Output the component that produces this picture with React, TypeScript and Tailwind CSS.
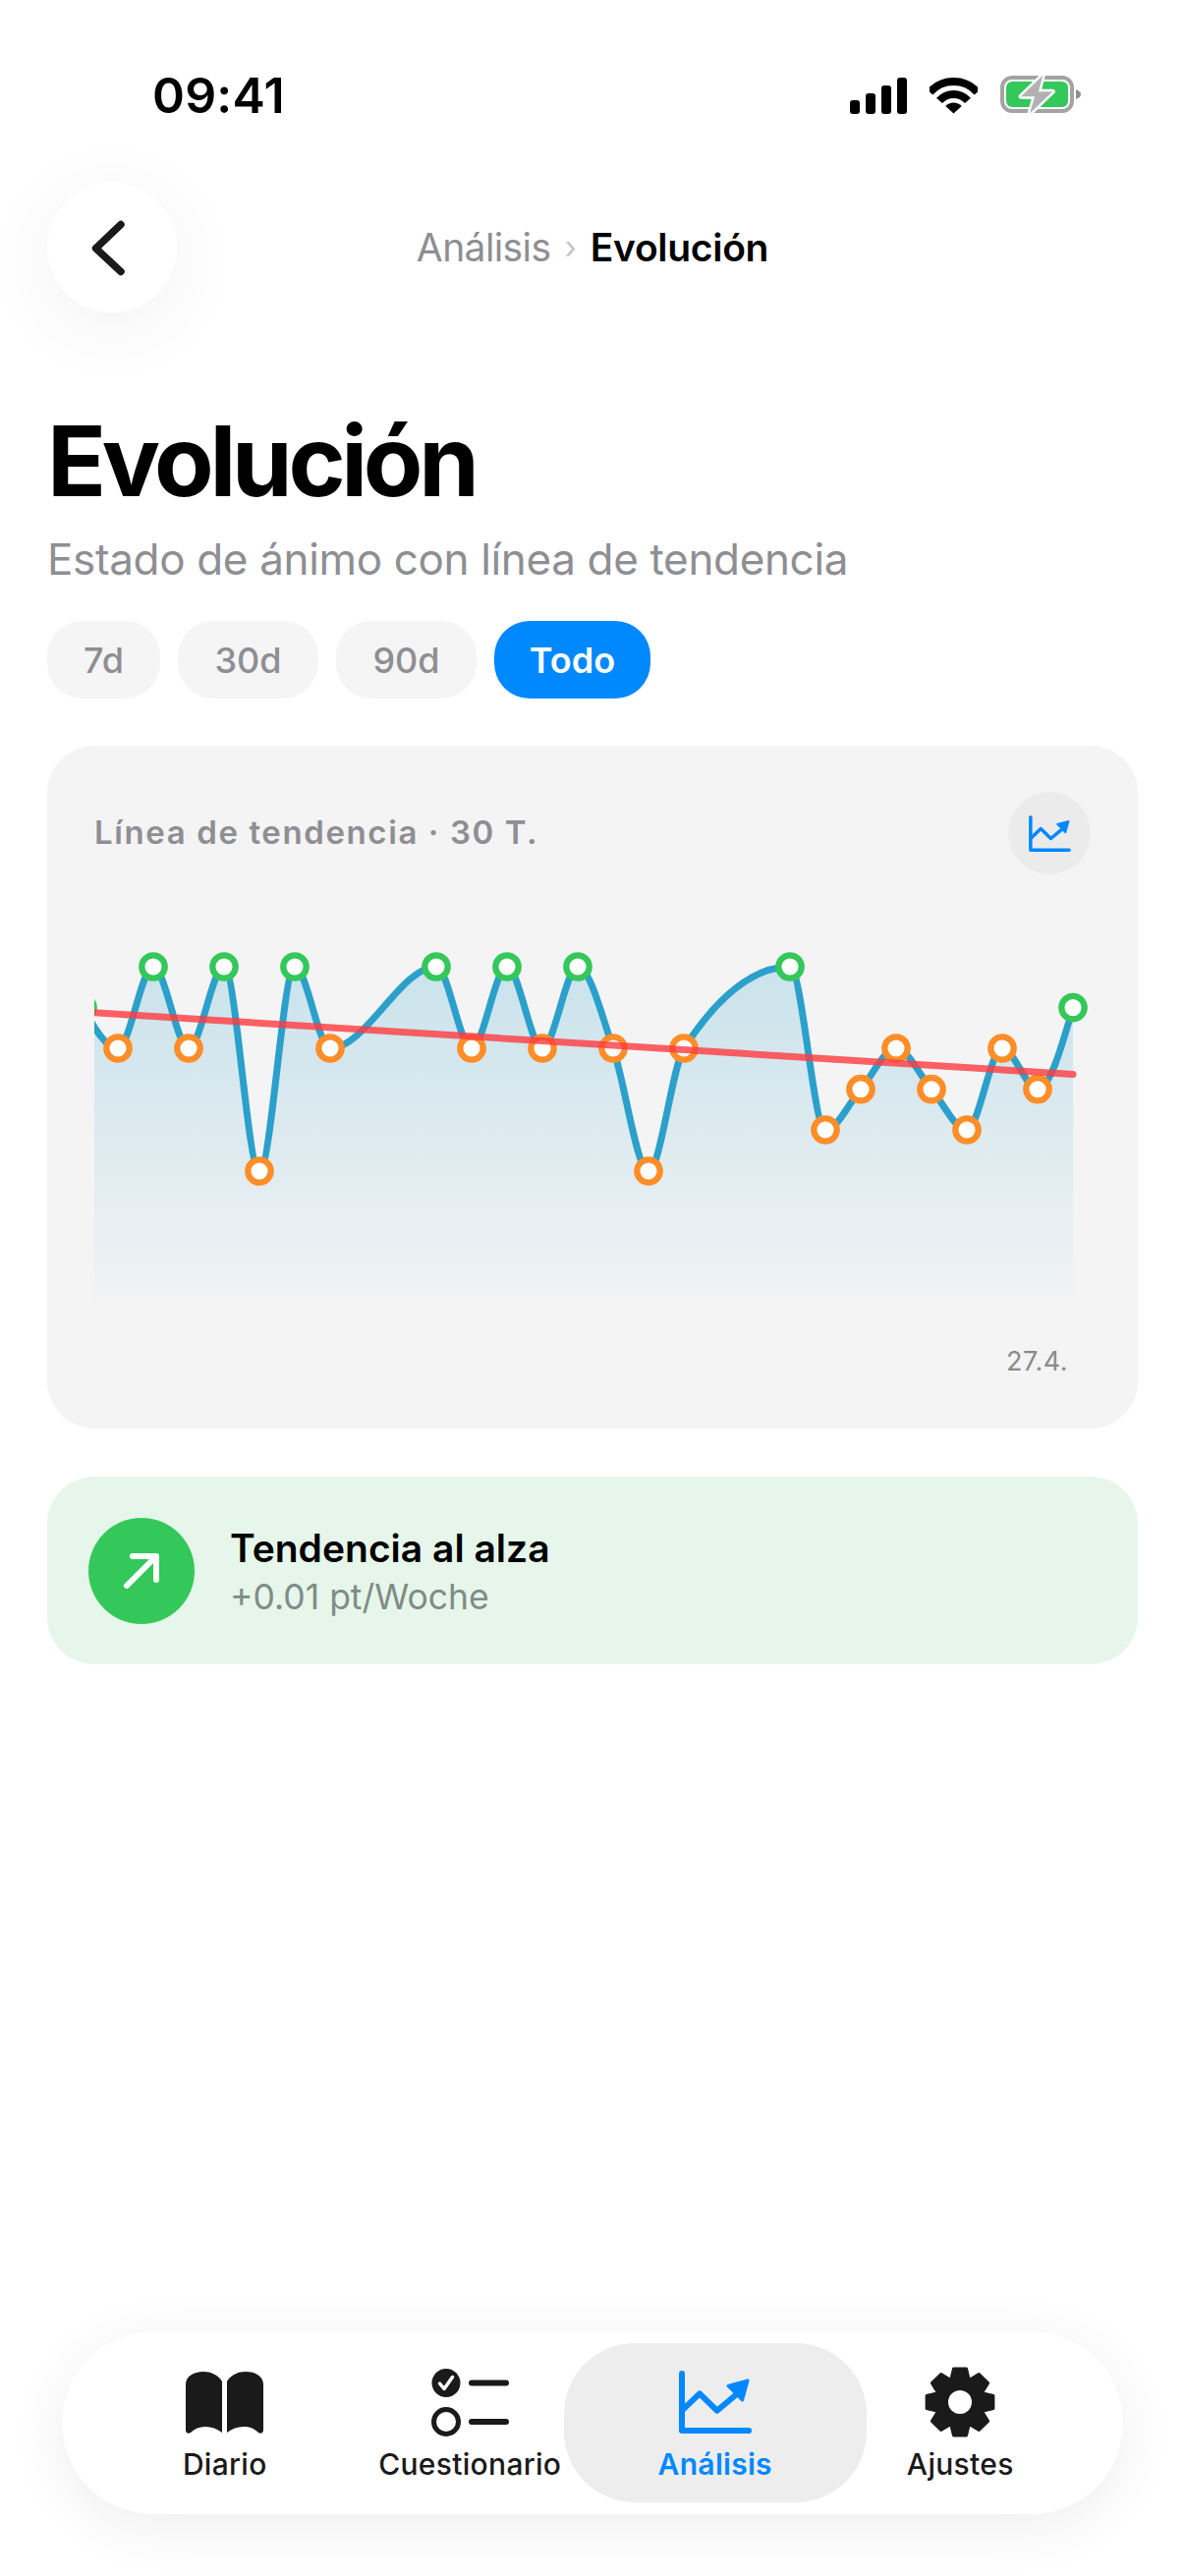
import React from "react";

type Pt = [number, number];

const L = [984, 1025.6, 1067, 1108.7, 1150, 1192];
const points: Pt[] = [
  [84, L[1]], [120, L[2]], [156, L[0]], [192, L[2]], [228, L[0]], [264, L[5]], [300, L[0]], [336, L[2]],
  [444, L[0]], [480, L[2]], [516, L[0]], [552, L[2]], [588, L[0]], [624, L[2]], [660, L[5]], [696, L[2]],
  [804, L[0]], [840, L[4]], [876, L[3]], [912, L[2]], [948, L[3]], [984, L[4]], [1020, L[2]], [1056, L[3]],
  [1092, L[1]],
];

// monotone x curve, same maths as d3
const monotonePath = (p: Pt[]) => {
  const sign = (v: number) => (v < 0 ? -1 : 1);
  const t: number[] = p.map((pt, i) => {
    if (i === 0 || i === p.length - 1) return 0;
    const h0 = pt[0] - p[i - 1][0];
    const h1 = p[i + 1][0] - pt[0];
    const s0 = (pt[1] - p[i - 1][1]) / h0;
    const s1 = (p[i + 1][1] - pt[1]) / h1;
    const q = (s0 * h1 + s1 * h0) / (h0 + h1);
    return (sign(s0) + sign(s1)) * Math.min(Math.abs(s0), Math.abs(s1), 0.5 * Math.abs(q)) || 0;
  });
  const n = p.length - 1;
  t[0] = (3 * (p[1][1] - p[0][1])) / (p[1][0] - p[0][0]) / 2 - t[1] / 2;
  t[n] = (3 * (p[n][1] - p[n - 1][1])) / (p[n][0] - p[n - 1][0]) / 2 - t[n - 1] / 2;
  let d = `M${p[0][0]} ${p[0][1]}`;
  for (let i = 0; i < n; i++) {
    const dx = (p[i + 1][0] - p[i][0]) / 3;
    d += `C${p[i][0] + dx} ${p[i][1] + dx * t[i]} ${p[i + 1][0] - dx} ${p[i + 1][1] - dx * t[i + 1]} ${p[i + 1][0]} ${p[i + 1][1]}`;
  }
  return d;
};

const gearPath = () => {
  let d = "";
  for (let i = 0; i < 8; i++) {
    const a = (i * Math.PI) / 4 - Math.PI / 2;
    const pts: [number, number][] = [
      [25, -0.37],
      [34.5, -0.19],
      [34.5, 0.19],
      [25, 0.37],
    ];
    pts.forEach(([r, o]) => {
      const x = 36 + r * Math.cos(a + o);
      const y = 36 + r * Math.sin(a + o);
      d += `${d ? "L" : "M"}${x.toFixed(2)} ${y.toFixed(2)}`;
    });
  }
  return d + "Z";
};

const ChartIcon = ({ className }: { className: string }) => (
  <svg viewBox="0 0 74 64" className={className} fill="none" stroke="#0088ff" strokeWidth="6" strokeLinecap="round" strokeLinejoin="round">
    <path d="M3 3V61H71" />
    <path d="M3 40.7L21 23.3L38.7 40.7L56.6 25.7" />
    <path d="M50 15.5L70 10L64.5 30Z" fill="#0088ff" strokeWidth="3" />
  </svg>
);

const BookIcon = () => (
  <svg viewBox="0 0 79 63" className="w-[79px] h-[63px]" fill="#1a1a1a">
    <path d="M37 10C33 3 25 0 18 0C8 0 0 5 0 13V59C0 63 3 63.5 5 62C9 58 14 56 20 56C26 56 32 58 37 62Z" />
    <path d="M42 10C46 3 54 0 61 0C71 0 79 5 79 13V59C79 63 76 63.5 74 62C70 58 65 56 59 56C53 56 47 58 42 62Z" />
  </svg>
);

const ChecklistIcon = () => (
  <svg viewBox="0 0 79 69" className="w-[79px] h-[69px]" fill="none">
    <circle cx="15" cy="14.5" r="14.5" fill="#1a1a1a" />
    <path d="M8.5 15L13 20.5L21.5 8.5" stroke="#fff" strokeWidth="3.5" strokeLinecap="round" strokeLinejoin="round" />
    <circle cx="15" cy="54" r="12.5" stroke="#1a1a1a" strokeWidth="5" />
    <path d="M41 14.5H76M41 54H76" stroke="#1a1a1a" strokeWidth="6" strokeLinecap="round" />
  </svg>
);

const GearIcon = () => (
  <svg viewBox="0 0 72 72" className="w-[72px] h-[72px]">
    <path d={gearPath()} fill="#1a1a1a" stroke="#1a1a1a" strokeWidth="3" strokeLinejoin="round" />
    <circle cx="36" cy="36" r="12" fill="#fff" />
  </svg>
);

const StatusIcons = () => (
  <div className="flex items-center">
    <div className="flex items-end gap-[6px] h-[37px]">
      <div className="w-[10px] h-[14px] rounded-[3px] bg-black" />
      <div className="w-[10px] h-[21px] rounded-[3px] bg-black" />
      <div className="w-[10px] h-[29px] rounded-[3px] bg-black" />
      <div className="w-[10px] h-[37px] rounded-[3px] bg-black" />
    </div>
    <svg viewBox="0 0 49 37" className="w-[49px] h-[37px] ml-[23px]" fill="none" stroke="#000" strokeWidth="8">
      <path d="M0.35 14.75A32.5 32.5 0 0 1 48.65 14.75" />
      <path d="M10 23.45A19.5 19.5 0 0 1 39 23.45" />
      <path d="M24.5 36.5L16.3 29.1A11 11 0 0 1 32.7 29.1Z" fill="#000" stroke="none" />
    </svg>
    <svg viewBox="0 0 84 42" className="w-[84px] h-[42px] ml-[23px]" fill="none">
      <rect x="2" y="3" width="71" height="34" rx="10" stroke="#a3a3a3" strokeWidth="4" />
      <rect x="6" y="7" width="63" height="26" rx="6" fill="#34c759" />
      <path d="M77 15C80 16 82 18 82 20C82 22 80 24 77 25Z" fill="#8e8e8e" />
      <path d="M43.3 .7L21 22.3H35L30 39.5L53.3 17.3H39Z" fill="#b2b2b2" stroke="#fff" strokeWidth="5" strokeLinejoin="round" paintOrder="stroke" />
    </svg>
  </div>
);

const ranges = [
  { label: "7d", w: "w-[115px]" },
  { label: "30d", w: "w-[143px]" },
  { label: "90d", w: "w-[143px]" },
];

const Chart = () => {
  const line = monotonePath(points);
  const last = points[points.length - 1];
  return (
    <svg viewBox="96 950 1014 390" className="block w-[1014px] h-[390px] mt-[60px]">
      <defs>
        <linearGradient id="area" gradientUnits="userSpaceOnUse" x1="0" y1="984" x2="0" y2="1328">
          <stop offset="0" stopColor="#2aa0cc" stopOpacity="0.21" />
          <stop offset="1" stopColor="#2aa0cc" stopOpacity="0.015" />
        </linearGradient>
      </defs>
      <path d={`${line}L${last[0]} 1328L${points[0][0]} 1328Z`} fill="url(#area)" />
      <path d={line} fill="none" stroke="#2ba0cb" strokeWidth="7" strokeLinecap="round" />
      {points.map(([x, y]) => (
        <circle key={x} cx={x} cy={y} r="11.7" fill="#fff" stroke={y <= L[1] ? "#34c759" : "#ff8d28"} strokeWidth="6.3" />
      ))}
      <path d="M84 1030L1092 1093.5" stroke="#ff3b3f" strokeOpacity="0.8" strokeWidth="7" strokeLinecap="round" />
    </svg>
  );
};

const tabs = [
  { label: "Diario", icon: <BookIcon /> },
  { label: "Cuestionario", icon: <ChecklistIcon /> },
];

export default function App() {
  return (
    <div className="relative flex flex-col w-[1206px] h-[2622px] bg-white text-black font-['Inter',sans-serif]">
      {/* status bar */}
      <div className="flex items-center justify-between h-[40px] mt-[77px] pl-[155px] pr-[104px]">
        <span className="text-[50px] leading-[40px] font-semibold tracking-[0.2px]">09:41</span>
        <StatusIcons />
      </div>

      {/* header */}
      <div className="grid grid-cols-[132px_1fr_132px] items-center mt-[69px] px-[48px]">
        <button className="flex items-center justify-center w-[132px] h-[132px] pr-[8px] rounded-full bg-white shadow-[0_14px_80px_rgba(0,0,0,0.06)]">
          <svg viewBox="0 0 41 60" className="w-[41px] h-[60px]" fill="none" stroke="#1a1a1a" strokeWidth="7.5" strokeLinecap="round" strokeLinejoin="round">
            <path d="M33 6.5L7.5 30.7L33 54.5" />
          </svg>
        </button>
        <div className="flex items-center justify-center gap-[14px] text-[39px] leading-[48px]">
          <span className="text-[#8e8e93] tracking-[-0.6px]">Análisis</span>
          <span className="text-[#c4c4c6] text-[32px]">›</span>
          <span className="font-semibold tracking-[-0.3px]">Evolución</span>
        </div>
        <div />
      </div>

      <div className="px-[48px]">
        <h1 className="mt-[96px] text-[99px] leading-[110px] font-bold tracking-[-4.3px]">Evolución</h1>
        <p className="mt-[17px] text-[44px] leading-[56px] tracking-[-0.35px] text-[#8e8e93]">Estado de ánimo con línea de tendencia</p>

        {/* range chips */}
        <div className="flex gap-[18px] mt-[35px]">
          {ranges.map((r) => (
            <div key={r.label} className={`flex items-center justify-center h-[79px] ${r.w} rounded-[36px] bg-[#f5f5f5] text-[36px] font-medium text-[#8e8e93]`}>
              {r.label}
            </div>
          ))}
          <div className="flex items-center justify-center h-[79px] w-[159px] rounded-[36px] bg-[#0088ff] text-[36px] font-semibold text-white">
            Todo
          </div>
        </div>

        {/* chart card */}
        <div className="h-[695px] mt-[48px] px-[48px] pt-[47px] rounded-[48px] bg-[#f4f4f4]">
          <div className="flex items-center justify-between h-[84px]">
            <span className="text-[33px] font-semibold tracking-[1.6px] text-[#8e8e93]">Línea de tendencia · 30 T.</span>
            <div className="flex items-center justify-center w-[84px] h-[84px] rounded-full bg-[#ebebeb]">
              <ChartIcon className="w-[43px] h-[37px]" />
            </div>
          </div>
          <Chart />
          <div className="mt-[28px] pr-[23px] text-right text-[27px] leading-[36px] tracking-[0.5px] text-[#8a8a8a]">27.4.</div>
        </div>

        {/* trend summary */}
        <div className="flex items-center h-[191px] mt-[49px] pl-[42px] gap-[36px] rounded-[48px] bg-[#e6f6ea]">
          <div className="flex items-center justify-center w-[108px] h-[108px] rounded-full bg-[#34c85a]">
            <svg viewBox="0 0 36 36" className="w-[36px] h-[36px]" fill="none" stroke="#fff" strokeWidth="6" strokeLinecap="round" strokeLinejoin="round">
              <path d="M3 33L33 3M9 3H33V27" />
            </svg>
          </div>
          <div className="pt-[3px]">
            <div className="text-[39px] leading-[46px] font-semibold">Tendencia al alza</div>
            <div className="mt-[5px] text-[35.5px] leading-[44px] text-[#7f8c86]">+0.01 pt/Woche</div>
          </div>
        </div>
      </div>

      {/* tab bar */}
      <div className="grid grid-cols-4 items-center h-[186px] mt-auto mb-[63px] mx-[63px] px-[41px] rounded-full bg-white shadow-[0_12px_60px_rgba(0,0,0,0.07)]">
        {tabs.map((t) => (
          <div key={t.label} className="flex flex-col items-center pt-[3px]">
            <div className="flex items-center h-[72px]">{t.icon}</div>
            <span className="mt-[9px] text-[30px] leading-[36px] font-medium tracking-[0.3px] text-[#1a1a1a] whitespace-nowrap">{t.label}</span>
          </div>
        ))}
        <div className="flex flex-col items-center justify-center h-[162px] -mx-[29px] pt-[3px] rounded-[72px] bg-[#ededed]">
          <div className="flex items-center h-[72px]">
            <ChartIcon className="w-[74px] h-[64px]" />
          </div>
          <span className="mt-[9px] text-[30px] leading-[36px] font-semibold tracking-[0.3px] text-[#0088ff]">Análisis</span>
        </div>
        <div className="flex flex-col items-center pt-[3px]">
          <div className="flex items-center h-[72px]">
            <GearIcon />
          </div>
          <span className="mt-[9px] text-[30px] leading-[36px] font-medium tracking-[0.3px] text-[#1a1a1a]">Ajustes</span>
        </div>
      </div>
    </div>
  );
}
